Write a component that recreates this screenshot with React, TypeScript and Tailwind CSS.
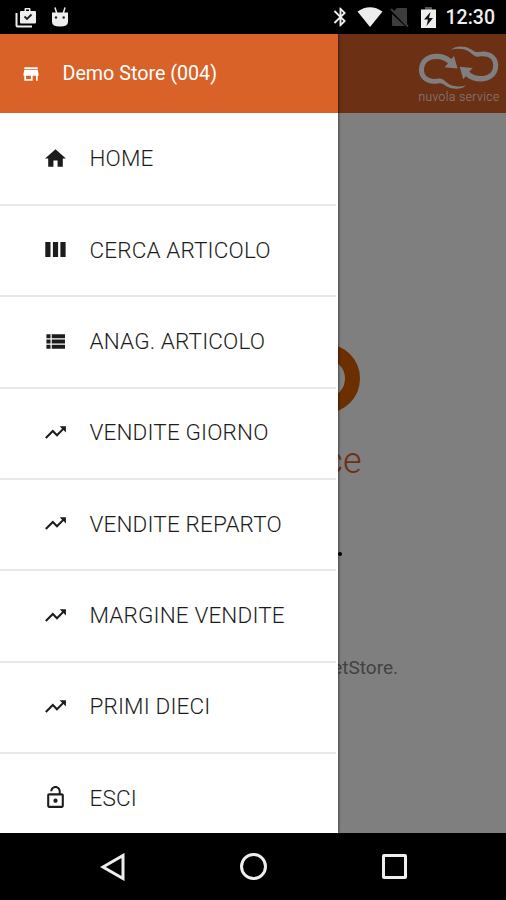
type IconProps = {
  path: string;
  className?: string;
};

const ICONS = {
  home: "M10 20v-6h4v6h5v-8h3L12 3 2 12h3v8z",
  columns: "M2.2 4.9h5v14.2h-5zM9.5 4.9h5v14.2h-5zM16.7 4.9h5v14.2h-5z",
  list: "M3.3 5h3.9v3.8H3.3zM3.3 10.1h3.9v3.8H3.3zM3.3 15.2h3.9V19H3.3zM8.4 5h12.7v3.8H8.4zM8.4 10.1h12.7v3.8H8.4zM8.4 15.2h12.7V19H8.4z",
  trend: "M16 6l2.29 2.29-4.88 4.88-4-4L2 16.59 3.41 18l6-6 4 4 6.3-6.29L22 12V6z",
  unlock:
    "M12 17c1.1 0 2-.9 2-2s-.9-2-2-2-2 .9-2 2 .9 2 2 2zm6-9h-1V6c0-2.76-2.24-5-5-5S7 3.24 7 6h1.9c0-1.71 1.39-3.1 3.1-3.1 1.71 0 3.1 1.39 3.1 3.1v2H6c-1.1 0-2 .9-2 2v10c0 1.1.9 2 2 2h12c1.1 0 2-.9 2-2V10c0-1.1-.9-2-2-2zm0 12H6V10h12v10z",
  store:
    "M20 4H4v2h16V4zm1 10v-2l-1-5H4l-1 5v2h1v6h10v-6h4v6h2v-6h1zm-9 4H6v-4h6v4z",
  bluetooth:
    "M17.71 7.71L12 2h-1v7.59L6.41 5 5 6.41 10.59 12 5 17.59 6.41 19 11 14.41V22h1l5.71-5.71-4.3-4.29 4.3-4.29zM13 5.83l1.88 1.88L13 9.59V5.83zm1.88 10.46L13 18.17v-3.76l1.88 1.88z",
};

const MENU = [
  { label: "HOME", icon: ICONS.home },
  { label: "CERCA ARTICOLO", icon: ICONS.columns },
  { label: "ANAG. ARTICOLO", icon: ICONS.list },
  { label: "VENDITE GIORNO", icon: ICONS.trend },
  { label: "VENDITE REPARTO", icon: ICONS.trend },
  { label: "MARGINE VENDITE", icon: ICONS.trend },
  { label: "PRIMI DIECI", icon: ICONS.trend },
  { label: "ESCI", icon: ICONS.unlock },
];

// One half of the cloud mark, the other half is the same shape turned round
const CLOUD =
  "M36 11L39.500 23.500L26.500 22.300L30 18.500C24 12 6 11.500 6 25C6 32 12 35 21 33.500C27 33 28 40.500 38 41.200Q43 42 48 40.500Q43 44.500 36 43.500C28 43 26 37.500 21 38.200C10 40.500 1 35 1 25C1 7 23 5 33.500 14z";

const Icon = ({ path, className }: IconProps) => (
  <svg viewBox="0 0 24 24" fill="currentColor" className={className}>
    <path d={path} />
  </svg>
);

const StatusBar = () => (
  <header className="flex h-[34px] shrink-0 items-center bg-black pl-[15px] pr-[11px] text-[#eeeeee]">
    <svg viewBox="0 0 22 21" className="h-[21px] w-[22px]">
      <path d="M1.500 6v12.500q0 1 1 1H17" fill="none" stroke="currentColor" strokeWidth="2" />
      <path
        d="M9.500 4V2Q9.500 1 10.500 1h4q1 0 1 1v2H20q1 0 1 1v10.500q0 1-1 1H6q-1 0-1-1V5q0-1 1-1zM11 2.500V4h3V2.500z"
        fill="currentColor"
        fillRule="evenodd"
      />
      <path d="M9.500 9.500l2.500 2.500 4.500-4.500" fill="none" stroke="#222" strokeWidth="1.900" />
    </svg>
    <svg viewBox="0 0 18 21" className="ml-[14px] h-[21px] w-[18px]">
      <path d="M4 .500l1.800 6M14 .500l-1.800 6" stroke="currentColor" strokeWidth="1.500" />
      <path d="M1 5.500h16V15q0 4.500-8 4.500T1 15z" fill="currentColor" />
      <circle cx="5" cy="10.500" r="1.200" fill="#222" />
      <circle cx="12.700" cy="10.500" r="1.200" fill="#222" />
    </svg>
    <div className="ml-auto flex items-center">
      <Icon path={ICONS.bluetooth} className="h-[24px] w-[23px]" />
      <svg viewBox="0 0 26 20" className="ml-[5px] h-5 w-[26px]">
        <path d="M.500 4.500Q13-4 25.500 4.500L13 20z" fill="currentColor" />
      </svg>
      <svg viewBox="0 0 20 21" className="ml-[7px] h-[21px] w-5">
        <path d="M7 1h9q1 0 1 1v16L3 5zM2 7l13 12H3q-1 0-1-1z" fill="#3d3d3d" />
        <path d="M1 2l17 17.500" stroke="#3d3d3d" strokeWidth="1.800" />
      </svg>
      <svg viewBox="0 0 15 21" className="ml-[11px] mt-px h-[21px] w-[15px]">
        <path d="M4 0h7v3H4z" fill="#555" />
        <path d="M0 2.500h15V21H0z" fill="currentColor" />
        <path d="M9.500 5L3 12.500h4L5.500 19l6.500-8H8z" fill="#111" />
      </svg>
      <span className="ml-[10px] mt-px text-[19.5px] font-medium leading-none">
        12:30
      </span>
    </div>
  </header>
);

const BrandLogo = () => (
  <div className="flex w-[82px] flex-col items-center text-white">
    <svg viewBox="0 0 82 46" className="h-[46px] w-[82px]" fill="currentColor">
      <path d={CLOUD} />
      <path d={CLOUD} transform="rotate(180 40.600 22.600)" />
    </svg>
    <span className="whitespace-nowrap text-[12px] font-light leading-[12px] tracking-[0.45px]">
      nuvola service
    </span>
  </div>
);

const WelcomePage = () => (
  <main className="flex flex-1 flex-col bg-white">
    <div className="flex h-[79px] shrink-0 justify-end bg-[#d96229] pr-[6px] pt-[11px]">
      <BrandLogo />
    </div>
    <div className="flex flex-1 flex-col items-center">
      <div className="mt-[231px] flex h-[69px] w-[214px] justify-end">
        <div className="h-[69px] w-[69px] rounded-full border-[15px] border-[#d96000]" />
      </div>
      <p className="mt-[26px] w-[217px] text-right text-[36px] font-light leading-[44px] text-[#d96229]">
        service
      </p>
      <div className="mt-[69px] flex w-[177px] justify-end">
        <span className="h-1 w-1 rounded-full bg-black" />
      </div>
      <p className="mt-[99px] w-[290px] text-right text-[19px] leading-[26px] text-[#858585]">
        MarketStore.
      </p>
    </div>
  </main>
);

const Drawer = () => (
  <aside className="absolute inset-y-0 left-0 flex w-[338px] flex-col overflow-hidden bg-white shadow-[0_0_3px_rgba(0,0,0,0.8)]">
    <div className="flex h-[79px] shrink-0 items-center bg-[#d96229] pl-[21px] text-white">
      <Icon path={ICONS.store} className="h-5 w-5" />
      <span className="ml-[21.5px] text-[19.7px] leading-none">Demo Store (004)</span>
    </div>
    <nav className="flex flex-col pt-[1.6px]">
      {MENU.map(({ label, icon }) => (
        <a
          key={label}
          className="mr-[2px] flex h-[91.35px] shrink-0 items-center border-b-2 border-[#e8e8e8] pb-[1.6px] pl-[43px] text-[#1c1c1c]"
        >
          <Icon path={icon} className="h-[25px] w-[25px]" />
          <span className="ml-[21.5px] text-[22.5px] font-light leading-none tracking-[0.15px]">
            {label}
          </span>
        </a>
      ))}
    </nav>
  </aside>
);

const NavigationBar = () => (
  <footer className="flex h-[67px] shrink-0 items-center justify-center bg-black text-[#eeeeee]">
    <svg viewBox="0 0 28 28" className="h-7 w-7" fill="none" stroke="currentColor">
      <path d="M4 14L24 2.500v23z" strokeWidth="3" />
    </svg>
    <span className="ml-[113px] h-[27px] w-[27px] rounded-full border-3 border-current" />
    <span className="ml-[115px] h-[25px] w-[25px] rounded-[2px] border-3 border-current" />
  </footer>
);

const App = () => (
  <div className="flex h-[900px] w-[506px] flex-col overflow-hidden bg-black font-['Roboto',sans-serif]">
    <StatusBar />
    <section className="relative flex min-h-0 flex-1 overflow-hidden">
      <WelcomePage />
      <div className="absolute inset-0 bg-black/50" />
      <Drawer />
    </section>
    <NavigationBar />
  </div>
);

export default App;
